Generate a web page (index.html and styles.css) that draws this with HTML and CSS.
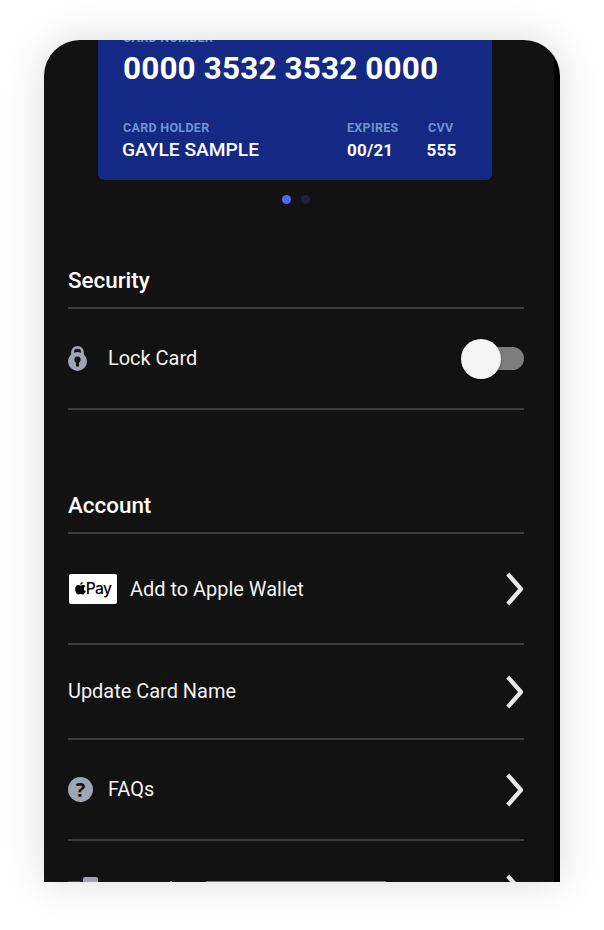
FILE: index.html
```html
<!DOCTYPE html>
<html lang="en">
<head>
<meta charset="utf-8">
<title>Card settings</title>
<link rel="stylesheet" href="styles.css">
</head>
<body>
<svg class="defs" width="0" height="0" aria-hidden="true">
  <symbol id="chevron" viewBox="0 0 18 34"><path d="M1.8 2 L15 17 L1.8 32" fill="none" stroke="#e8e8e8" stroke-width="4.2" stroke-linejoin="round"/></symbol>
</svg>
<main class="phone">
  <section class="card">
    <div class="label number-label">CARD NUMBER</div>
    <div class="number">0000 3532 3532 0000</div>
    <div class="details">
      <div class="holder"><div class="label">CARD HOLDER</div><div class="value name">GAYLE SAMPLE</div></div>
      <div class="expires"><div class="label">EXPIRES</div><div class="value">00/21</div></div>
      <div class="cvv"><div class="label">CVV</div><div class="value">555</div></div>
    </div>
  </section>
  <div class="dots"><span class="dot active"></span><span class="dot"></span></div>

  <section class="group">
    <h2 class="security-title">Security</h2>
    <div class="row lock-row">
      <svg class="lock" width="19" height="25" viewBox="0 0 19 25">
        <path d="M4.6 9 V6 a4.9 4.6 0 0 1 9.8 0 V9" fill="none" stroke="#a0a5b4" stroke-width="2.8"/>
        <circle cx="9.5" cy="15.4" r="9.5" fill="#a0a5b4"/>
        <circle cx="9.5" cy="13.7" r="3.1" fill="#121212"/>
        <rect x="8" y="14" width="3" height="6.4" rx=".6" fill="#121212"/>
      </svg>
      <span class="text">Lock Card</span>
      <span class="toggle"><span class="knob"></span></span>
    </div>
  </section>

  <section class="group">
    <h2 class="account-title">Account</h2>
    <div class="row wallet-row">
      <span class="pay">
        <svg width="11" height="13" viewBox="0 0 11 13"><path d="M5.4 3.5 C6.4 3.5 6.9 2.9 8 2.9 C9 2.9 9.9 3.4 10.4 4.2 C8.2 5.5 8.6 8.2 10.8 9.1 C10.2 10.7 9.1 12.6 7.9 12.6 C7 12.6 6.7 12.1 5.6 12.1 C4.5 12.1 4.1 12.6 3.3 12.6 C1.7 12.6 .2 9.7 .2 7.1 C.2 4.5 1.7 3 3.3 3 C4.2 3 4.9 3.5 5.4 3.5 Z M5.3 2.8 C5.2 1.4 6.3 .2 7.7 0 C7.9 1.5 6.8 2.8 5.3 2.8 Z" fill="#000"/></svg><b>Pay</b>
      </span>
      <span>Add to Apple Wallet</span>
      <svg class="chevron"><use href="#chevron"/></svg>
    </div>
    <div class="row name-row"><span class="text">Update Card Name</span><svg class="chevron"><use href="#chevron"/></svg></div>
    <div class="row faq-row">
      <span class="help">?</span><span class="text">FAQs</span>
      <svg class="chevron"><use href="#chevron"/></svg>
    </div>
    <div class="row last-row">
      <svg class="device" width="34" height="28" viewBox="0 0 34 28"><rect x="0" y="4" width="13" height="20" rx="1" fill="#45474e"/><rect x="15" y="0" width="15" height="28" rx="2" fill="#a0a5b4"/></svg>
      <span class="tip"></span>
      <svg class="chevron"><use href="#chevron"/></svg>
    </div>
  </section>
  <div class="home-bar"></div>
</main>
</body>
</html>
```
FILE: styles.css
```css
* { box-sizing: border-box; }
body { margin: 0; height: 930px; overflow: hidden; background: #fff; font-family: Roboto, sans-serif; }
.defs { position: absolute; }
.phone {
  display: flow-root;
  position: relative;
  width: 516px;
  height: 842px;
  margin: 40px 0 0 44px;
  border-radius: 36px 36px 0 0;
  padding: 0 36px 0 24px;
  background: linear-gradient(90deg, #121212 510px, #000 510px);
  color: #f2f2f2;
  box-shadow: 0 0 40px rgba(0, 0, 0, .15);
}
.card {
  display: flow-root;
  width: 394px;
  height: 140px;
  margin-left: 30px;
  padding-left: 25px;
  background: #142984;
  border-radius: 0 0 6px 6px;
  overflow: hidden;
  color: #fff;
}
.label { font-size: 12.5px; line-height: 15px; font-weight: 700; letter-spacing: .3px; color: #6f95cf; white-space: nowrap; }
.number-label { margin-top: -10px; }
.number { margin-top: 6px; font-size: 31.5px; line-height: 36px; font-weight: 700; letter-spacing: .13px; white-space: nowrap; }
.details { display: flex; margin-top: 33px; }
.holder { width: 224px; }
.expires { width: 81px; }
.value { font-size: 17px; line-height: 20px; margin-top: 5px; font-weight: 700; letter-spacing: .2px; }
.name { font-size: 19.2px; font-weight: 500; margin-left: -1px; letter-spacing: 0; }
.cvv .value { margin-left: -1.5px; }
.dots { display: flex; gap: 10px; margin: 15px 0 0 214px; }
.dot { width: 9px; height: 9px; border-radius: 50%; background: #21213f; }
.dot.active { background: #5068f5; }
h2 { margin: 0; font-size: 22.4px; line-height: 26px; font-weight: 500; color: #fff; border-bottom: 2px solid #3d3d3d; }
.security-title { height: 42px; margin-top: 63px; }
.account-title { height: 42px; margin-top: 82px; }
.row { display: flex; align-items: center; border-bottom: 2px solid #3d3d3d; font-size: 19.95px; }
.lock-row { height: 101px; }
.lock { margin-right: 21px; }
.toggle { position: relative; width: 54px; height: 23px; margin-left: auto; border-radius: 12px; background: #7e7e7e; }
.knob { position: absolute; left: -9.5px; top: -8.5px; width: 40px; height: 40px; border-radius: 50%; background: #f5f5f5; box-shadow: 0 1px 3px rgba(0, 0, 0, .5); }
.wallet-row { height: 111px; }
.wallet-row > * { position: relative; top: .5px; }
.pay { display: flex; align-items: center; justify-content: center; width: 48px; height: 30px; margin: 0 13px 0 1px; background: #fff; border-radius: 2px; color: #000; }
.pay svg { margin-top: -1px; }
.pay b { margin-top: -1px; font: 500 15.6px/20px Inter, sans-serif; letter-spacing: -.6px; }
.name-row { height: 95px; }
.faq-row { height: 101px; }
.text { margin-bottom: 1px; }
.chevron { width: 18px; height: 34px; margin-left: auto; }
.help { width: 25px; height: 25px; margin-right: 15px; border-radius: 50%; background: #a0a5b4; color: #121212; font: 700 20px/25px "Open Sans", sans-serif; text-align: center; }
.last-row { height: 41px; align-items: flex-start; border: 0; overflow: hidden; }
.last-row .device { flex: none; margin-top: 36px; }
.last-row .chevron { flex: none; margin-top: 33px; }
.tip { width: 2px; height: 1px; margin: 40px 0 0 68px; background: #888; }
.home-bar { position: absolute; left: 162px; bottom: 0; width: 180px; height: 1px; background: #777; border-radius: 1px; }
```
